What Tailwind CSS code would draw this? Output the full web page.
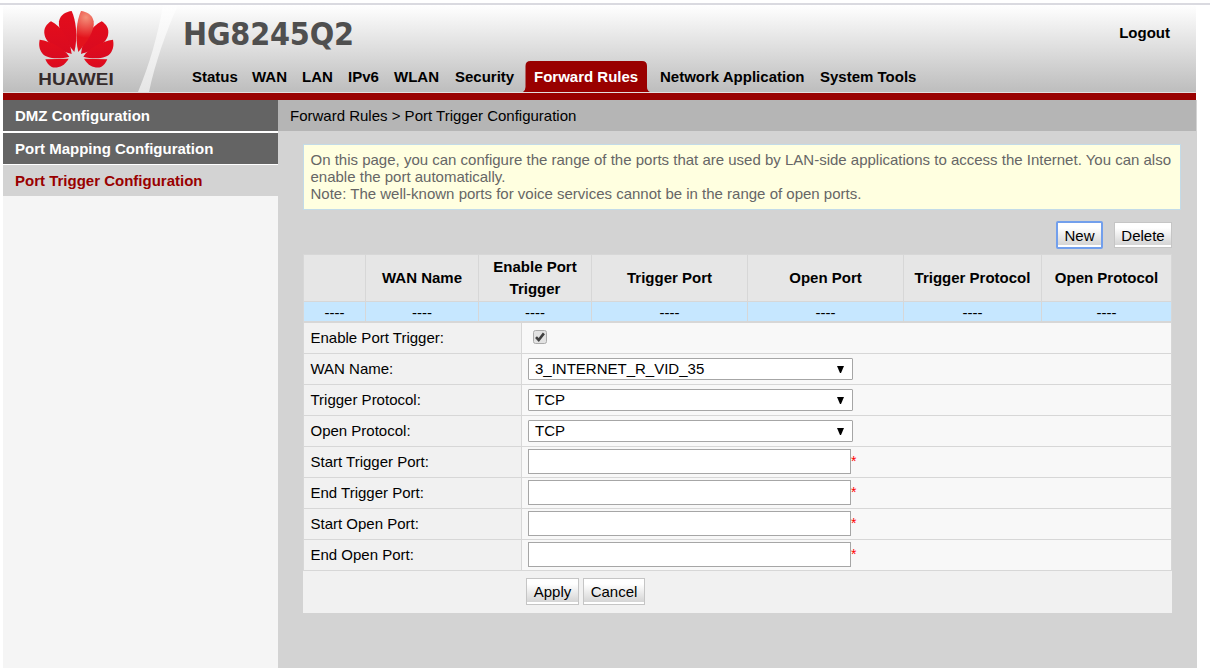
<!DOCTYPE html>
<html lang="en">
<head>
<meta charset="utf-8">
<title>HG8245Q2</title>
<script src="https://cdn.jsdelivr.net/npm/@tailwindcss/browser@4"></script>
</head>
<body class="h-[668px] w-[1210px] overflow-hidden bg-white pl-[3px] text-[15px] leading-[17px] text-black" style="font-family:'Liberation Sans',Arial,sans-serif">
<div class="-ml-[3px] mt-[3px] h-[2px] bg-[#dadae0]"></div>

<header class="relative flex h-[87px] w-[1193px] bg-linear-to-b from-white via-[#dedede] to-[#bdbdbd]">
  <svg class="block h-[87px] w-[180px] shrink-0" viewBox="9 15 540 261">
    <defs>
      <linearGradient id="shine" x1="0" y1="0" x2="0" y2="1"><stop offset="0" stop-color="#fff"/><stop offset="1" stop-color="#f0f0f0"/></linearGradient>
      <radialGradient id="glow" gradientUnits="userSpaceOnUse" cx="258" cy="52" r="62"><stop offset="0" stop-color="#f4917a"/><stop offset="1" stop-color="#e3131c"/></radialGradient>
      <linearGradient id="petal" x1="0" y1="0" x2="0" y2="1"><stop offset="0" stop-color="#e30d1c"/><stop offset="1" stop-color="#d90a20"/></linearGradient>
    </defs>
    <path d="M489 15H534C500 90 465 190 447 276H414C448 195 474 105 489 15Z" fill="url(#shine)" opacity=".8"/>
    <g fill="url(#petal)">
      <path d="M223 156C196 125 173 92 177 64C181 43 199 35 215 33C228 60 234 112 223 156Z"/>
      <path d="M215 162C182 153 140 134 134 106C129 86 140 72 153 64C184 80 211 118 215 162Z"/>
      <path d="M208 170C180 177 136 179 124 156C116 142 117 130 119 119C154 124 192 144 208 170Z"/>
      <path d="M206 176C194 198 170 207 155 201C146 197 140 187 136 178Z"/>
    </g>
    <g fill="url(#petal)" transform="translate(458 0) scale(-1 1)">
      <path d="M215 162C182 153 140 134 134 106C129 86 140 72 153 64C184 80 211 118 215 162Z"/>
      <path d="M208 170C180 177 136 179 124 156C116 142 117 130 119 119C154 124 192 144 208 170Z"/>
      <path d="M206 176C194 198 170 207 155 201C146 197 140 187 136 178Z"/>
    </g>
    <path d="M235 156C262 125 285 92 281 64C277 43 259 35 243 33C230 60 224 112 235 156Z" fill="url(#glow)"/>
    <text x="115" y="255" font-size="51" font-weight="700" textLength="226" lengthAdjust="spacingAndGlyphs" fill="#352b2b">HUAWEI</text>
  </svg>
  <div class="flex flex-1 flex-col">
    <div class="flex h-[56px] items-start justify-between pr-[26px]">
      <h1 class="pt-[9px] text-[32px] leading-[40px] font-bold tracking-[-0.2px] text-[#4f4f4f]" style="font-family:'DejaVu Sans Condensed','DejaVu Sans',sans-serif;font-stretch:condensed">HG8245Q2</h1>
      <a class="pt-[19px] font-bold">Logout</a>
    </div>
    <nav class="flex h-[31px] pl-[9px] leading-[31px] font-bold whitespace-nowrap">
      <a class="w-[60px]">Status</a><a class="w-[50px]">WAN</a><a class="w-[46px]">LAN</a><a class="w-[46px]">IPv6</a><a class="w-[61px]">WLAN</a><a class="w-[68px]">Security</a>
      <a class="relative w-[137px] pl-[11px] text-white"><svg class="absolute top-0 left-0 h-[31px] w-[127px]" viewBox="0 0 127 31"><path d="M0 31Q2.500 29.500 2.500 26V5Q2.500 0 7.500 0H119Q124 0 124 5V26Q124 29.500 127 31Z" fill="#900"/></svg><span class="relative">Forward Rules</span></a>
      <a class="w-[160px]">Network Application</a><a>System Tools</a>
    </nav>
  </div>
</header>
<div class="h-px w-[1193px] bg-[#e3dede]"></div>
<div class="h-[7px] w-[1193px] bg-[#990000]"></div>

<div class="flex h-[568px]">
  <aside class="w-[275px] shrink-0 bg-[#f5f5f5] leading-[32px] font-bold text-white">
    <div class="h-[33px] border-b-2 border-white bg-[#646464] pl-3">DMZ Configuration</div>
    <div class="h-[32px] border-b border-white bg-[#646464] pl-3">Port Mapping Configuration</div>
    <div class="h-[31px] bg-[#d3d3d3] pl-3 text-[#990000]">Port Trigger Configuration</div>
  </aside>
  <main class="w-[919px] shrink-0 bg-[#d3d3d3]">
    <div class="h-[31px] w-[918px] bg-[#b5b5b5] pl-3 leading-[32px]">Forward Rules &gt; Port Trigger Configuration</div>
    <div class="mt-[13px] ml-[25px] h-[66px] w-[878px] border border-[#c3dbe8] bg-[#ffffe0] pt-[6px] pl-[6.500px] whitespace-nowrap text-[#666]">On this page, you can configure the range of the ports that are used by LAN-side applications to access the Internet. You can also<br>enable the port automatically.<br>Note: The well-known ports for voice services cannot be in the range of open ports.</div>

    <div class="mt-[11px] ml-[25px] flex h-[33px] w-[869px] items-start justify-end gap-[11px]">
      <button class="h-[28px] w-[47px] rounded-[2px] border-2 border-[#729fec] bg-linear-to-b from-white from-20% to-[#d0d0d0] shadow-[inset_0_-2px_0_#fff]">New</button>
      <button class="mt-px h-[26px] w-[58px] border border-[#c5c5c5] bg-linear-to-b from-white from-20% to-[#d0d0d0] shadow-[inset_0_-2px_0_#fff]">Delete</button>
    </div>

    <div class="ml-[25px] w-[869px]">
      <div class="grid h-[69px] grid-cols-[62px_113px_113px_156px_156px_138px_129px] grid-rows-[46px_19px] gap-y-px border border-[#d7d7d7] border-b-2 bg-[#d7d7d7] text-center">
        <div class="border-r border-[#d7d7d7] bg-[#e6e6e6]"></div>
        <div class="flex items-center justify-center border-r border-[#d7d7d7] bg-[#e6e6e6] leading-[22px] font-bold">WAN Name</div>
        <div class="flex items-center justify-center border-r border-[#d7d7d7] bg-[#e6e6e6] leading-[22px] font-bold">Enable Port<br>Trigger</div>
        <div class="flex items-center justify-center border-r border-[#d7d7d7] bg-[#e6e6e6] leading-[22px] font-bold">Trigger Port</div>
        <div class="flex items-center justify-center border-r border-[#d7d7d7] bg-[#e6e6e6] leading-[22px] font-bold">Open Port</div>
        <div class="flex items-center justify-center border-r border-[#d7d7d7] bg-[#e6e6e6] leading-[22px] font-bold">Trigger Protocol</div>
        <div class="flex items-center justify-center bg-[#e6e6e6] leading-[22px] font-bold">Open Protocol</div>
        <div class="border-r border-[#d7d7d7] bg-[#c6e7ff] leading-[21px]">----</div>
        <div class="border-r border-[#d7d7d7] bg-[#c6e7ff] leading-[21px]">----</div>
        <div class="border-r border-[#d7d7d7] bg-[#c6e7ff] leading-[21px]">----</div>
        <div class="border-r border-[#d7d7d7] bg-[#c6e7ff] leading-[21px]">----</div>
        <div class="border-r border-[#d7d7d7] bg-[#c6e7ff] leading-[21px]">----</div>
        <div class="border-r border-[#d7d7d7] bg-[#c6e7ff] leading-[21px]">----</div>
        <div class="bg-[#c6e7ff] leading-[21px]">----</div>
      </div>
      <div class="grid grid-cols-[217px_649px] auto-rows-[30px] gap-x-px gap-y-px border-x border-b border-[#d7d7d7] bg-[#d7d7d7] leading-[30px]">
        <div class="bg-[#f1f1f1] pl-[6.500px]">Enable Port Trigger:</div>
        <div class="bg-[#f8f8f8] pt-[7px] pl-[11px]"><svg class="block" width="14" height="14" viewBox="0 0 14 14"><rect x=".5" y=".5" width="13" height="13" rx="2" fill="#e2e2e2" stroke="#ababab"/><path d="M3 7.200L5.700 10L10.900 3.400" fill="none" stroke="#404040" stroke-width="2.600"/></svg></div>
        <div class="bg-[#f1f1f1] pl-[6.500px]">WAN Name:</div>
        <div class="bg-[#f8f8f8] pt-1 pl-[6px]"><div class="flex h-[22px] w-[325px] items-center justify-between rounded-[1px] border border-[#a6a6a6] bg-white pr-2 pl-[6px]"><span>3_INTERNET_R_VID_35</span><svg width="7" height="7" viewBox="0 0 7 7"><path d="M0 0H7L4 7H3Z"/></svg></div></div>
        <div class="bg-[#f1f1f1] pl-[6.500px]">Trigger Protocol:</div>
        <div class="bg-[#f8f8f8] pt-1 pl-[6px]"><div class="flex h-[22px] w-[325px] items-center justify-between rounded-[1px] border border-[#a6a6a6] bg-white pr-2 pl-[6px]"><span>TCP</span><svg width="7" height="7" viewBox="0 0 7 7"><path d="M0 0H7L4 7H3Z"/></svg></div></div>
        <div class="bg-[#f1f1f1] pl-[6.500px]">Open Protocol:</div>
        <div class="bg-[#f8f8f8] pt-1 pl-[6px]"><div class="flex h-[22px] w-[325px] items-center justify-between rounded-[1px] border border-[#a6a6a6] bg-white pr-2 pl-[6px]"><span>TCP</span><svg width="7" height="7" viewBox="0 0 7 7"><path d="M0 0H7L4 7H3Z"/></svg></div></div>
        <div class="bg-[#f1f1f1] pl-[6.500px]">Start Trigger Port:</div>
        <div class="flex bg-[#f8f8f8] pt-[2px] pl-[6px]"><input class="h-[25px] w-[323px] border border-[#a6a6a6] bg-white"><span class="text-[14px] leading-[25px] text-[#ff0000]">*</span></div>
        <div class="bg-[#f1f1f1] pl-[6.500px]">End Trigger Port:</div>
        <div class="flex bg-[#f8f8f8] pt-[2px] pl-[6px]"><input class="h-[25px] w-[323px] border border-[#a6a6a6] bg-white"><span class="text-[14px] leading-[25px] text-[#ff0000]">*</span></div>
        <div class="bg-[#f1f1f1] pl-[6.500px]">Start Open Port:</div>
        <div class="flex bg-[#f8f8f8] pt-[2px] pl-[6px]"><input class="h-[25px] w-[323px] border border-[#a6a6a6] bg-white"><span class="text-[14px] leading-[25px] text-[#ff0000]">*</span></div>
        <div class="bg-[#f1f1f1] pl-[6.500px]">End Open Port:</div>
        <div class="flex bg-[#f8f8f8] pt-[2px] pl-[6px]"><input class="h-[25px] w-[323px] border border-[#a6a6a6] bg-white"><span class="text-[14px] leading-[25px] text-[#ff0000]">*</span></div>
      </div>
      <div class="flex h-[42px] gap-1 bg-[#f1f1f1] pt-[7px] pl-[223px]">
        <button class="h-[27px] w-[53px] border border-[#c5c5c5] bg-linear-to-b from-white from-20% to-[#d0d0d0] shadow-[inset_0_-2px_0_#fff]">Apply</button>
        <button class="h-[27px] w-[62px] border border-[#c5c5c5] bg-linear-to-b from-white from-20% to-[#d0d0d0] shadow-[inset_0_-2px_0_#fff]">Cancel</button>
      </div>
    </div>
  </main>
</div>
</body>
</html>
